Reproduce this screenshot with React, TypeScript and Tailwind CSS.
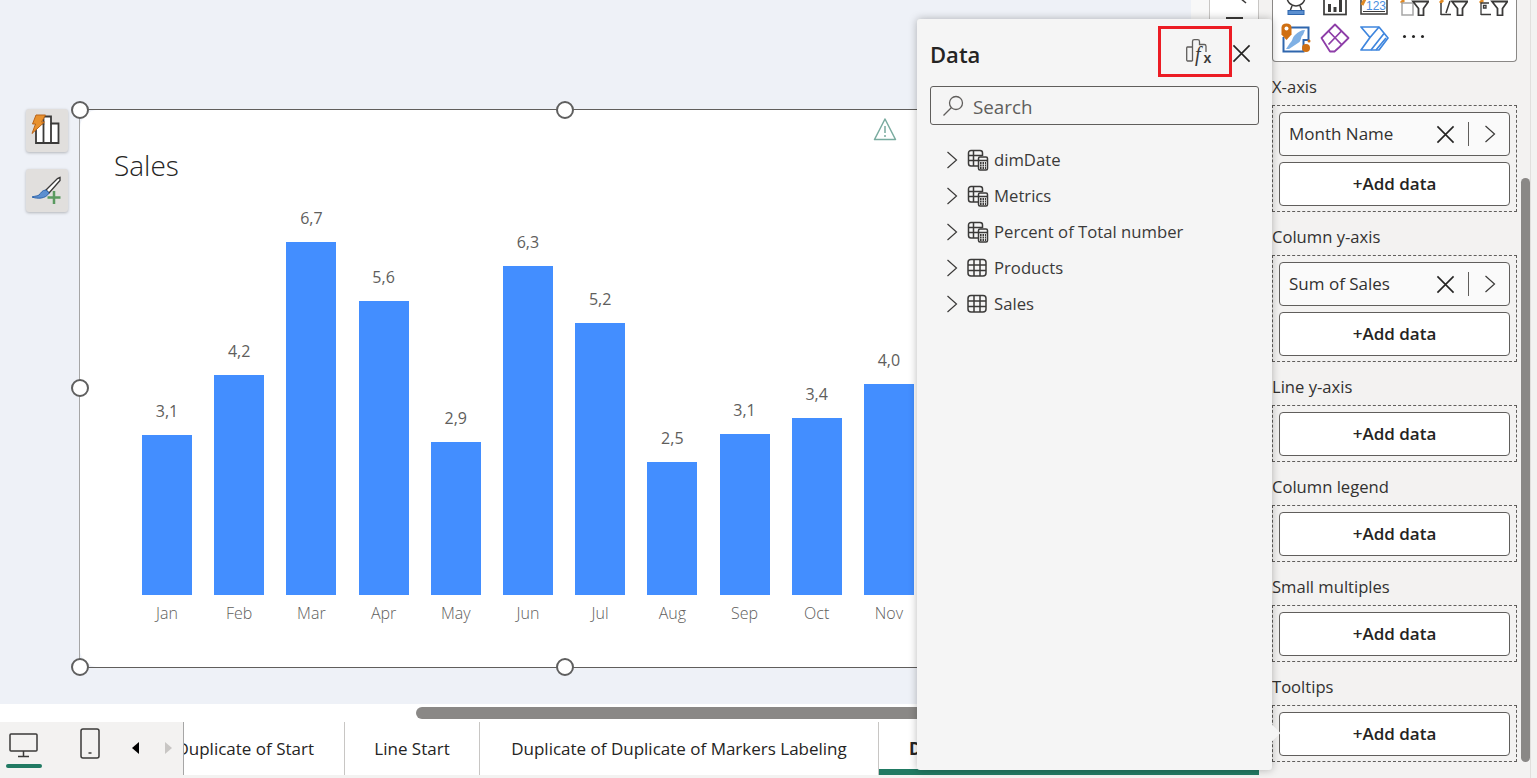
import React from "react";

const FONT = "font-['Open_Sans','Noto_Sans',sans-serif]";

const bars = [
  { m: "Jan", v: "3,1", h: 160 },
  { m: "Feb", v: "4,2", h: 220 },
  { m: "Mar", v: "6,7", h: 353 },
  { m: "Apr", v: "5,6", h: 294 },
  { m: "May", v: "2,9", h: 153 },
  { m: "Jun", v: "6,3", h: 329 },
  { m: "Jul", v: "5,2", h: 272 },
  { m: "Aug", v: "2,5", h: 133 },
  { m: "Sep", v: "3,1", h: 161 },
  { m: "Oct", v: "3,4", h: 177 },
  { m: "Nov", v: "4,0", h: 211 },
];

function Cross({ size = 20, stroke = "#252423" }: { size?: number; stroke?: string }) {
  return (
    <svg width={size} height={size} viewBox="0 0 20 20" fill="none" stroke={stroke} strokeWidth="1.7">
      <path d="M1.5 1.5 18.5 18.5M18.5 1.5 1.5 18.5" />
    </svg>
  );
}

function Chevron({ stroke = "#3b3a39" }: { stroke?: string }) {
  return (
    <svg width="12" height="18" viewBox="0 0 12 18" fill="none" stroke={stroke} strokeWidth="1.2">
      <path d="M1.5 1 10.5 9 1.5 17" />
    </svg>
  );
}

function TableIcon() {
  return (
    <svg width="20" height="20" viewBox="0 0 20 20" fill="none" stroke="#3b3a39" strokeWidth="1.5">
      <rect x="1" y="1.5" width="18" height="16.5" rx="3" />
      <path d="M7 1.5V18M13 1.5V18M1 7H19M1 12.500H19" />
    </svg>
  );
}

function CalcTableIcon() {
  return (
    <svg width="22" height="22" viewBox="0 0 22 22" fill="none" stroke="#3b3a39" strokeWidth="1.5">
      <path d="M11 17H4a2.5 2.5 0 0 1-2.500-2.500V4A2.500 2.500 0 0 1 4 1.500h9A2.500 2.500 0 0 1 15.500 4v3" />
      <path d="M6.500 1.500V17M1.500 6.500H15M1.500 11.500H11" />
      <rect x="11.500" y="8" width="9" height="13" rx="1.500" fill="#f5f5f5" />
      <path d="M11.500 11.500H20.500" />
      <path d="M13 14h6M13 16.500h6M13 19h6" strokeDasharray="1.600 .9" strokeWidth="1.800" />
    </svg>
  );
}

function FxIcon() {
  return (
    <svg width="26" height="27" viewBox="0 0 26 27" fill="none" stroke="#605e5c" strokeWidth="1.300" className="ml-[7px] mt-[2px]">
      <path d="M6.500 22H1.500A1 1 0 0 1 .700 21V9A1 1 0 0 1 1.500 8H6.500" />
      <path d="M6.500 22V2.500A1.800 1.800 0 0 1 8.300 .700H11.700A1.800 1.800 0 0 1 13.500 2.500V5.500H18.200A1.800 1.800 0 0 1 20 7.300V13" />
      <text x="9" y="22" fontSize="20" fontStyle="italic" fill="#3b3a39" stroke="none" fontFamily="Liberation Serif, serif">f</text>
      <text x="17.500" y="24" fontSize="14" fontWeight="700" fill="#3b3a39" stroke="none" fontFamily="Liberation Sans, sans-serif">x</text>
    </svg>
  );
}

function QuickInsights() {
  return (
    <svg width="42" height="43" viewBox="0 0 42 43" fill="none">
      <path d="M10 34V14.500H17.500V7.500H25V14.500H32.500V34Z" fill="#fff" stroke="#3b3a39" strokeWidth="1.800" />
      <path d="M17.500 14.500V34M25 14.500V34" stroke="#3b3a39" strokeWidth="1.800" />
      <path d="M10 6H19.500L15.500 13H18.500L6 24.500L9.500 15H6.500Z" fill="#e8912d" stroke="#b9651a" strokeWidth="1" />
    </svg>
  );
}

function BrushPlus() {
  return (
    <svg width="42" height="43" viewBox="0 0 42 43" fill="none">
      <path d="M34 8.500 31.500 9.500 20 21 23 24 34 11.500Z" fill="#fff" stroke="#3b3a39" strokeWidth="1.400" />
      <path d="M20 21c-4 0-5 3-7 5-1 1-4 1-7 2 5 2 14 2 17-4Z" fill="#5b8fd0" stroke="#2f66ad" strokeWidth="1" />
      <path d="M28 22V35M21.500 28.500H34.500" stroke="#5a9a60" strokeWidth="2.500" />
    </svg>
  );
}

function Warning() {
  return (
    <svg width="24" height="24" viewBox="0 0 24 24" fill="none" stroke="#79ab9f" strokeWidth="1.500">
      <path d="M12 2 1.500 22.500H22.500Z" strokeLinejoin="round" />
      <path d="M12 9V16M12 18V20" />
    </svg>
  );
}

function Handle({ cls }: { cls: string }) {
  return <span className={`absolute w-[18px] h-[18px] rounded-full bg-white border-2 border-[#5f5f5f] -translate-x-1/2 -translate-y-1/2 ${cls}`} />;
}

function FilterIcon({ kind }: { kind: number }) {
  return (
    <svg width="30" height="30" viewBox="0 0 30 30" fill="none">
      <path d="M2 17 5 14" stroke="#e08a24" strokeWidth="3" />
      {kind === 0 && <rect x="3" y="17" width="11" height="12" stroke="#a6a6a6" strokeWidth="1.500" />}
      {kind === 1 && <path d="M3 29V17M3 28.500H13M8 27 12 15" stroke="#3b3a39" strokeWidth="1.500" />}
      {kind === 2 && <path d="M3 29V17H11M3 28.500H13M5.500 19.500h2.500v2.500H5.500Z" stroke="#3b3a39" strokeWidth="1.300" />}
      <path d="M14 15.500H29.500L24.500 22.500V29.500H19.500V22.500Z" fill="#fff" stroke="#3b3a39" strokeWidth="1.800" />
    </svg>
  );
}

function Gallery() {
  return (
    <div className="h-[62px] w-[245px] overflow-hidden flex flex-col justify-end bg-white border border-t-0 border-[#8a8886] rounded-b-[4px] pl-[3px] pb-[8px]">
      <div className="grid grid-cols-[repeat(6,39.400px)] auto-rows-[30px] gap-y-[7px] justify-items-center">
        <svg width="30" height="30" viewBox="0 0 30 30" fill="none">
          <path d="M6 11c0 5 4 9 9 9s9-4 9-9" stroke="#3b3a39" strokeWidth="1.500" />
          <path d="M11 20 9 25M19 20l2 5" stroke="#3b3a39" strokeWidth="1.500" />
          <rect x="7" y="24.500" width="16" height="4" fill="#5b8fd0" stroke="#2f66ad" />
        </svg>
        <svg width="30" height="30" viewBox="0 0 30 30" fill="none">
          <rect x="4" y="6" width="22" height="22.500" stroke="#3b3a39" strokeWidth="1.700" />
          <path d="M8 18h3v8H8ZM13.500 21h3v5h-3ZM19 13h3v13h-3Z" fill="#3b3a39" />
        </svg>
        <svg width="30" height="30" viewBox="0 0 30 30" fill="none">
          <rect x="2" y="10" width="26" height="18" stroke="#3b3a39" strokeWidth="1.500" />
          <path d="M3 19 6 13" stroke="#e08a24" strokeWidth="3" />
          <text x="7" y="24" fontSize="12" fill="#4a8fe0" fontFamily="Liberation Sans, sans-serif">123</text>
          <path d="M4 25.500H26" stroke="#3b3a39" strokeWidth="1" />
        </svg>
        <FilterIcon kind={0} />
        <FilterIcon kind={1} />
        <FilterIcon kind={2} />
        <svg width="30" height="30" viewBox="0 0 30 30" fill="none">
          <path d="M8 4.500H27.500V17H22.500V28.500H2.500V14" stroke="#2f66ad" strokeWidth="2" fill="#fff" />
          <path d="M14 12C17 9 20 7 24 7L22 12C19 14 21 18 17 20L8 26H5L9 20C12 17 11 15 14 12Z" fill="#7fb0e4" />
          <path d="M5.500 0.500C8.500 .5 10.500 2 10.500 4.500v7L5.500 17 .5 11.500v-7C.5 2 2.500 .5 5.500 .5Z" fill="#cf6f12" />
          <circle cx="5.500" cy="5.500" r="2" fill="#fff" />
          <circle cx="25" cy="25" r="4" fill="#cf6f12" />
          <circle cx="28" cy="18" r="1.500" fill="#cf6f12" />
        </svg>
        <svg width="30" height="30" viewBox="0 0 30 30" fill="none" stroke="#8e3ea8" strokeWidth="1.800">
          <path d="M15 1.500 28.500 15 19.500 24 14.500 28.500H10L1.500 15 10 6.500Z" strokeLinejoin="round" />
          <path d="M8.500 8 21.500 21.500M21.500 8 8.500 21.500" />
        </svg>
        <svg width="30" height="30" viewBox="0 0 30 30" fill="none" stroke="#3f86de" strokeWidth="1.700">
          <path d="M2 4H20L29 15 20 27H7L2 27 11 14.500 2 4Z" strokeLinejoin="round" />
          <path d="M11 14.500 20 4M12 27 25 10.500M17 27 27 15" />
        </svg>
        <div className="flex items-center gap-[6px] h-[30px] pb-[4px]">
          <span className="w-[3px] h-[3px] rounded-full bg-[#252423]" />
          <span className="w-[3px] h-[3px] rounded-full bg-[#252423]" />
          <span className="w-[3px] h-[3px] rounded-full bg-[#252423]" />
        </div>
      </div>
    </div>
  );
}

function AddData() {
  return (
    <div className="h-[44px] bg-white border border-[#605e5c] rounded-[4px] flex items-center justify-center text-[17px] font-semibold text-[#252423]">
      +Add data
    </div>
  );
}

function Well({ label, field }: { label: string; field?: string }) {
  return (
    <div className="mb-[17px]">
      <div className="h-[26px] text-[16.600px] leading-[16px] text-[#323130]">{label}</div>
      <div className="border border-dashed border-[#605e5c] px-[6px] pt-[6px] pb-[5px] flex flex-col gap-[6px]">
        {field && (
          <div className="h-[44px] bg-[#fafafa] border border-[#605e5c] rounded-[4px] flex items-center pl-[9px] pr-[13px] text-[17px] text-[#323130]">
            <span className="flex-1">{field}</span>
            <Cross size={19} />
            <span className="w-px h-[24px] bg-[#605e5c] ml-[13px] mr-[15px]" />
            <Chevron />
          </div>
        )}
        <AddData />
      </div>
    </div>
  );
}

function Row({ name, calc }: { name: string; calc?: boolean }) {
  return (
    <div className="h-[36px] flex items-center text-[16.700px] text-[#3b3a39]">
      <span className="w-[12px] ml-[16px] mr-[9px] flex"><Chevron /></span>
      <span className="w-[27px] flex items-center">{calc ? <CalcTableIcon /> : <TableIcon />}</span>
      <span>{name}</span>
    </div>
  );
}

export default function App() {
  return (
    <div className={`${FONT} w-[1537px] h-[778px] overflow-hidden flex relative bg-[#f3f2f1]`}>
      <div className="w-[1259px] flex flex-col shrink-0">
        <div className="h-[704px] flex">
          <div className="w-[1192px] bg-[#eef1f7] pt-[109px] pl-[26px] flex overflow-hidden">
            <div className="flex flex-col gap-[17px] w-[42px] shrink-0">
              <div className="w-[42px] h-[43px] bg-[#e1dfdd] rounded-[3px] shadow-[0_1px_3px_rgba(0,0,0,0.25)] flex items-center justify-center"><QuickInsights /></div>
              <div className="w-[42px] h-[43px] bg-[#e1dfdd] rounded-[3px] shadow-[0_1px_3px_rgba(0,0,0,0.25)] flex items-center justify-center"><BrushPlus /></div>
            </div>
            <div className="ml-[11px] w-[970px] h-[559px] shrink-0 relative border-t border-b border-l border-t-[#605e5c] border-b-[#605e5c] border-l-[#a6a6a6]">
              <div className="w-full h-full bg-white rounded-[18px] flex flex-col">
                <div className="h-[70px] pl-[34px] pt-[35px] text-[28px] leading-[40px] font-light text-[#252423]">Sales</div>
                <div className="flex-1 flex items-end gap-[22.200px] pl-[62px] pb-[42px]">
                  {bars.map((b) => (
                    <div key={b.m} className="w-[50px] flex flex-col items-center">
                      <span className="h-[24px] leading-[24px] mb-[12.500px] text-[16px] text-[#605e5c]">{b.v}</span>
                      <div className="w-[50px] bg-[#438eff]" style={{ height: b.h }} />
                      <span className="h-[24px] leading-[24px] mt-[6px] text-[16px] font-light text-[#605e5c]">{b.m}</span>
                    </div>
                  ))}
                </div>
              </div>
              <span className="absolute left-[793px] top-[7px]"><Warning /></span>
              <Handle cls="left-0 top-0" />
              <Handle cls="left-1/2 top-0" />
              <Handle cls="left-0 top-[278px]" />
              <Handle cls="left-0 top-full" />
              <Handle cls="left-1/2 top-full" />
            </div>
          </div>
          <div className="w-[18px] bg-[#f8f8f8]" />
          <div className="w-[50px] bg-white border-l border-r border-[#c8c6c4] flex flex-col items-center pt-0 relative">
            <svg width="20" height="20" viewBox="0 0 20 20" fill="none" stroke="#3b3a39" strokeWidth="1.500" className="ml-[10px] -mb-[3px]">
              <path d="M11 -2 17 3" />
            </svg>
            <span className="w-[17px] h-[2px] bg-[#3b3a39]" />
          </div>
        </div>
        <div className="h-[18px] bg-white pt-[3px]">
          <div className="ml-[416px] w-[776px] h-[12px] rounded-l-full bg-[#8a8886]" />
        </div>
        <div className="h-[53px] flex bg-white">
          <div className="w-[184px] shrink-0 bg-[#f3f2f1] border-r border-[#a6a6a6] flex items-start relative">
            <div className="w-[36px] ml-[6px] mt-[10px] flex flex-col items-center">
              <svg width="30" height="28" viewBox="0 0 30 28" fill="none" stroke="#3b3a39" strokeWidth="1.500">
                <rect x="1" y="2" width="27" height="17" rx="1" />
                <path d="M14.500 19V24M9 24.500H20" />
              </svg>
              <span className="w-[36px] h-[4px] mt-[4px] rounded-full bg-[#217a63]" />
            </div>
            <svg width="20" height="32" viewBox="0 0 20 32" fill="none" stroke="#3b3a39" strokeWidth="1.500" className="ml-[38px] mt-[6px]">
              <rect x="1" y="1" width="18" height="29" rx="2" />
              <path d="M8.500 25H11.500" />
            </svg>
            <span className="ml-[32px] mt-[20px] w-0 h-0 border-y-[6px] border-y-transparent border-r-[7px] border-r-black" />
            <span className="ml-[26px] mt-[20px] w-0 h-0 border-y-[6px] border-y-transparent border-l-[7px] border-l-[#c8c6c4]" />
          </div>
          <div className="flex-1 flex overflow-hidden text-[17px] text-[#252423]">
            <div className="w-[161px] shrink-0 border-r border-[#c8c6c4] flex items-center justify-end pr-[30px] overflow-hidden whitespace-nowrap">Duplicate of Start</div>
            <div className="w-[135px] shrink-0 border-r border-[#c8c6c4] flex items-center justify-center whitespace-nowrap">Line Start</div>
            <div className="w-[399px] shrink-0 border-r border-[#c8c6c4] flex items-center justify-center whitespace-nowrap">Duplicate of Duplicate of Markers Labeling</div>
            <div className="flex-1 border-b-[6px] border-b-[#217a63] flex items-center pl-[30px] pt-[6px] font-bold whitespace-nowrap">Duplicate</div>
          </div>
        </div>
        <div className="h-[3px]" />
      </div>

      <div className="flex-1 flex pl-[13px]">
        <div className="w-[245px] shrink-0">
          <div className="mb-[17px]"><Gallery /></div>
          <Well label="X-axis" field="Month Name" />
          <Well label="Column y-axis" field="Sum of Sales" />
          <Well label="Line y-axis" />
          <Well label="Column legend" />
          <Well label="Small multiples" />
          <Well label="Tooltips" />
        </div>
        <div className="ml-[4px] w-[9px] h-[584px] mt-[178px] rounded-full bg-[#8a8886] shrink-0" />
        <div className="w-[7px] ml-0 border-l border-[#e1dfdd]" />
      </div>

      <div className="absolute left-[917px] top-[19px] w-[355px] h-[751px] bg-[#f5f5f5] rounded-[3px] shadow-[0_0_8px_rgba(0,0,0,0.28)] px-[13px]">
        <div className="h-[67px] flex items-start pr-[8px]">
          <span className="mt-[17px] flex-1 text-[22px] leading-[36px] font-semibold text-[#252423]">Data</span>
          <span className="mt-[7px] w-[74px] h-[51px] border-[3px] border-[#ec1c24] flex items-center justify-center"><FxIcon /></span>
          <span className="mt-[25px] ml-0"><Cross size={19} /></span>
        </div>
        <div className="h-[39px] w-[329px] border border-[#605e5c] rounded-[3px] flex items-center pl-[11px] text-[18.800px] text-[#605e5c]">
          <svg width="22" height="22" viewBox="0 0 22 22" fill="none" stroke="#605e5c" strokeWidth="1.300" className="mr-[9px]">
            <circle cx="14" cy="8" r="6.500" />
            <path d="M9.500 12.500 1.500 20.500" />
          </svg>
          <span className="pt-[3px]">Search</span>
        </div>
        <div className="mt-[17px] -ml-0">
          <Row name="dimDate" calc />
          <Row name="Metrics" calc />
          <Row name="Percent of Total number" calc />
          <Row name="Products" />
          <Row name="Sales" />
        </div>
        <span className="absolute right-[-6px] top-[708px] w-[12px] h-[12px] rotate-45 bg-[#f5f5f5]" />
      </div>
    </div>
  );
}
